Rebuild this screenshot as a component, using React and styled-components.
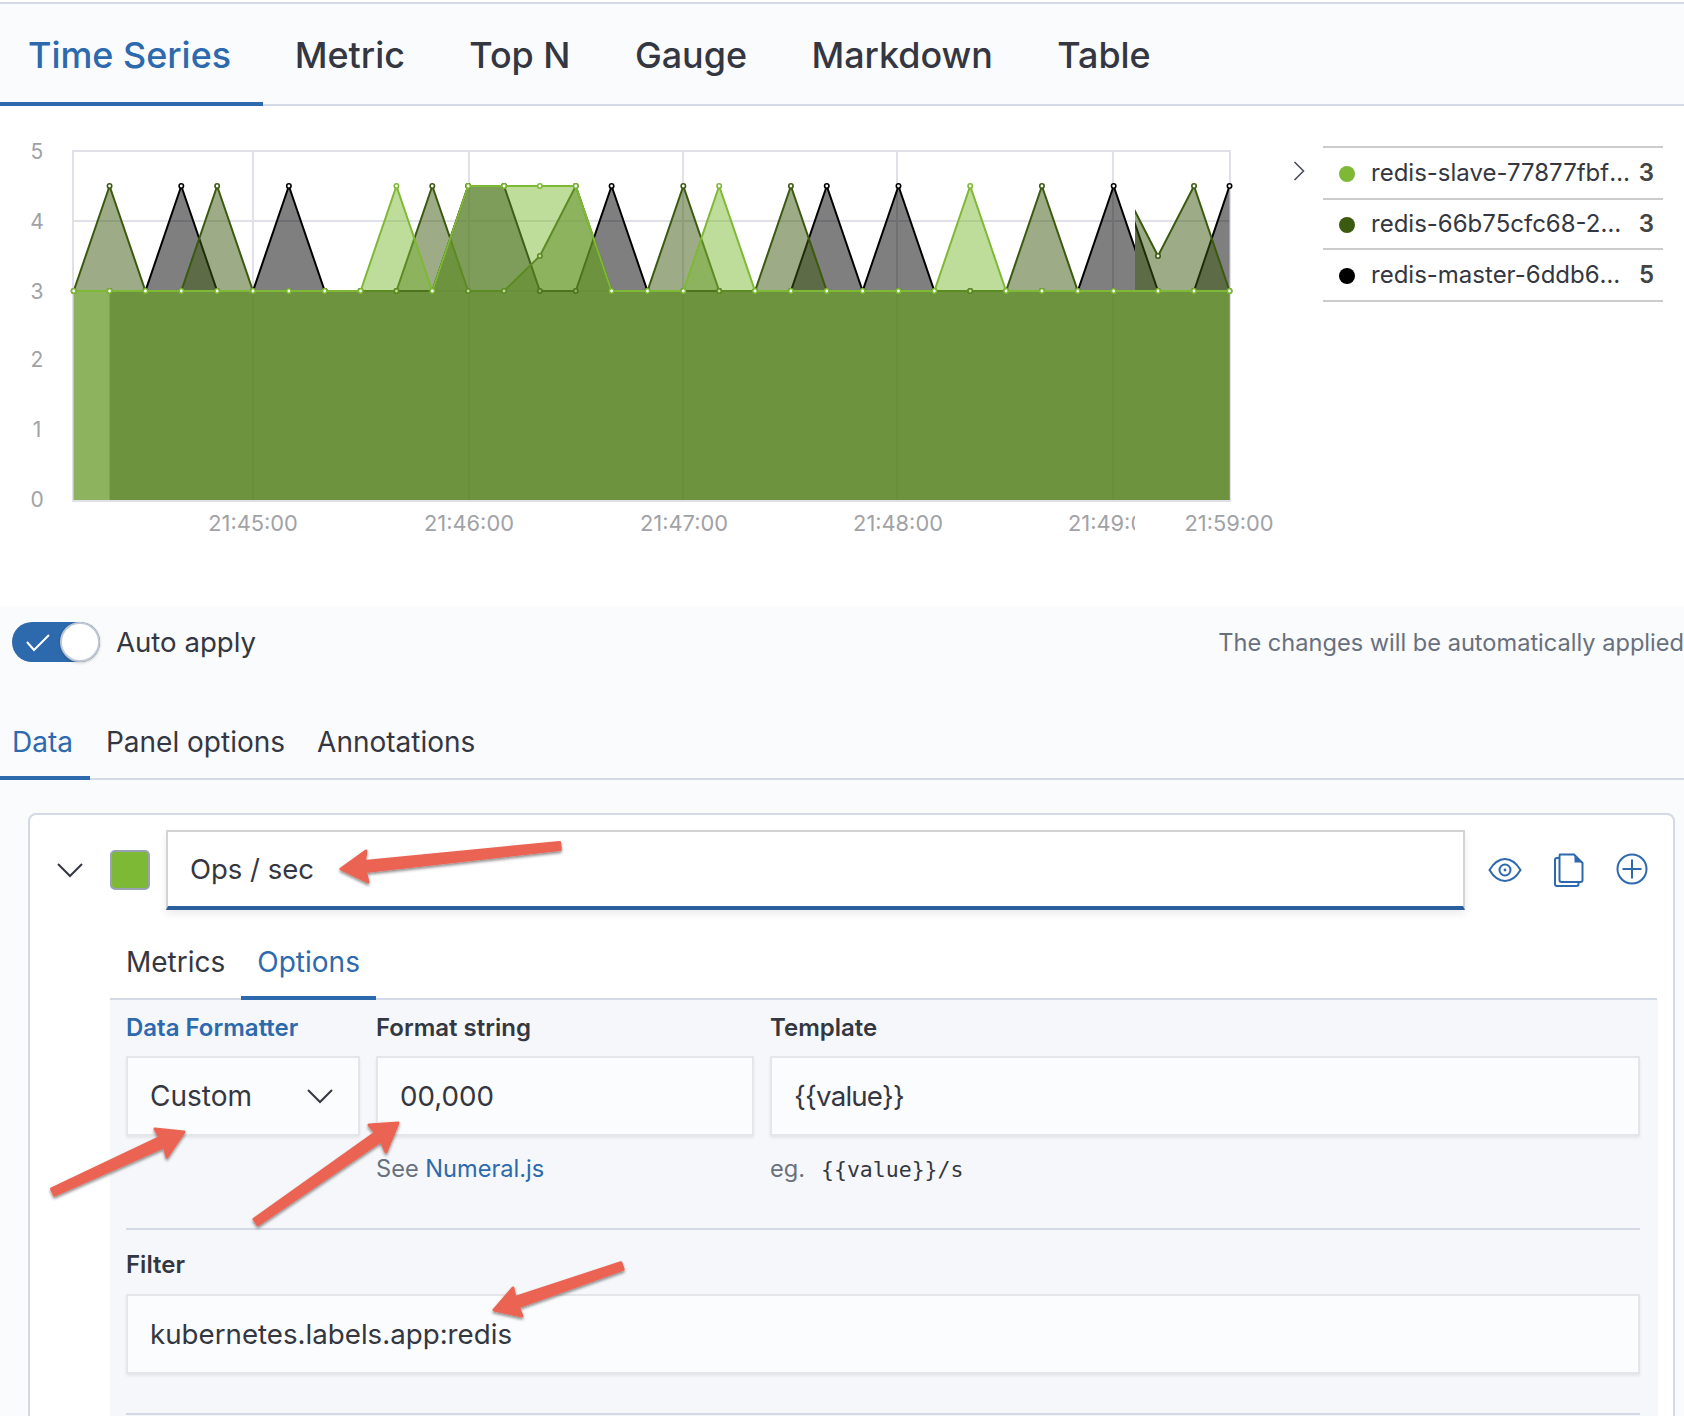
import React from 'react';
import styled, { createGlobalStyle } from 'styled-components';

const GlobalStyle = createGlobalStyle`
html, body {
  margin: 0;
  padding: 0;
  background: #fff;
  overflow: hidden;
}
* { box-sizing: border-box; }
`;

const BLUE = '#2d69ad';
const INK = '#343741';

const Page = styled.div`
position: relative;
width: 1684px;
height: 1416px;
overflow: hidden;
font-family: Inter, 'Noto Sans', sans-serif;
color: ${INK};
background: #fff;
padding-top: 2px;
`;

const TopTabs = styled.div`
display: flex;
height: 104px;
background: #fafbfd;
border-top: 2px solid #d3dae6;
border-bottom: 2px solid #d3dae6;
`;

const TopTab = styled.div`
display: flex;
align-items: center;
height: 102px;
margin-bottom: -2px;
padding: 4px 32.2px 0;
font-size: 35.9px;
font-weight: 500;
color: ${p => (p.$active ? BLUE : INK)};
border-bottom: 4px solid ${p => (p.$active ? BLUE : 'transparent')};
&:first-child { padding-left: 28px; padding-right: 31.5px; }
`;

const ChartRow = styled.div`
display: flex;
height: 500px;
background: #fff;
`;

const ChartSvg = styled.svg`
display: block;
flex: none;
font-family: Inter, sans-serif;
font-size: 21px;
`;

const TickLabel = styled.text`
font-size: 21.8px;
fill: #a0a2a6;
`;

const LegendToggle = styled.svg`
flex: none;
margin: 55px 0 0 3px;
`;

const Legend = styled.div`
width: 340px;
margin: 40px 0 0 18px;
align-self: flex-start;
border-top: 2px solid #ccc;
`;

const LegendRow = styled.div`
display: flex;
align-items: center;
height: ${p => p.$height}px;
padding: 0 9px 2px 16px;
border-bottom: 2px solid #ccc;
font-size: 24px;
`;

const Dot = styled.span`
flex: none;
width: 16px;
height: 16px;
margin-top: 3px;
border-radius: 50%;
background: ${p => p.$color};
`;

const LegendName = styled.span`
flex: 1;
min-width: 0;
margin: 0 ${p => p.$gap}px 0 16px;
white-space: nowrap;
overflow: hidden;
text-overflow: ellipsis;
`;

const LegendValue = styled.span`
font-weight: 600;
color: #444;
`;

const Editor = styled.div`
height: 810px;
background: #fafbfd;
`;

const ApplyBar = styled.div`
display: flex;
align-items: center;
height: 72px;
padding-left: 12px;
`;

const Switch = styled.div`
position: relative;
width: 88px;
height: 40px;
border-radius: 20px;
background: ${BLUE};
`;

const SwitchCheck = styled.svg`
position: absolute;
left: 13px;
top: 12px;
`;

const SwitchThumb = styled.span`
position: absolute;
right: 0;
top: 0;
width: 40px;
height: 40px;
border-radius: 50%;
background: #fff;
border: 2px solid #c3c9d3;
box-shadow: 0 1px 3px rgba(0, 0, 0, 0.2);
`;

const SwitchLabel = styled.span`
margin-left: 16px;
font-size: 27.6px;
`;

const ApplyNote = styled.span`
margin-left: auto;
font-size: 23.6px;
color: #69707d;
white-space: nowrap;
`;

const EditorTabs = styled.div`
display: flex;
height: 80px;
margin-top: 22px;
border-bottom: 2px solid #d3dae6;
`;

const EditorTab = styled.div`
display: flex;
align-items: center;
height: 80px;
margin-bottom: -2px;
padding: 8px 16px 0;
font-size: 28px;
color: ${p => (p.$active ? BLUE : INK)};
border-bottom: 4px solid ${p => (p.$active ? BLUE : 'transparent')};
&:first-child { padding-left: 12px; padding-right: 17px; }
`;

const Card = styled.div`
height: 700px;
margin: 33px 9px 0 28px;
background: #fff;
border: 2px solid #d3dae6;
border-radius: 8px;
padding-top: 15px;
`;

const SeriesRow = styled.div`
display: flex;
align-items: center;
height: 80px;
`;

const Collapse = styled.div`
display: flex;
justify-content: center;
width: 80px;
padding-right: 1px;
`;

const Swatch = styled.div`
width: 40px;
height: 40px;
margin-right: 16px;
background: #7eb936;
border: 2px solid #98a2b3;
border-radius: 5px;
`;

const NameInput = styled.div`
display: flex;
align-items: center;
width: 1299px;
height: 80px;
padding: 0 0 0 22px;
font-size: 27.5px;
background: #fff;
border: 2px solid #d3d3d3;
border-bottom: 4px solid #2a5f9e;
box-shadow: 0 4px 8px rgba(0, 0, 0, 0.08);
`;

const IconGroup = styled.div`
display: flex;
margin-left: 8px;
`;

const IconCell = styled.div`
display: flex;
align-items: center;
justify-content: center;
width: 64px;
`;

const PlusCell = styled(IconCell)`
width: 62px;
padding-bottom: 2px;
`;

const SubTabs = styled.div`
display: flex;
margin: 19px 16px 0 80px;
border-bottom: 2px solid #d3dae6;
`;

const SubTab = styled.div`
margin-bottom: -2px;
padding: 16px 16px 17px;
font-size: 28px;
line-height: 34px;
color: ${p => (p.$active ? BLUE : INK)};
border-bottom: 4px solid ${p => (p.$active ? BLUE : 'transparent')};
`;

const OptionsPanel = styled.div`
height: 500px;
margin: 0 15px 0 80px;
padding: 13px 18px 0 16px;
background: #f5f7fa;
`;

const FieldGrid = styled.div`
display: grid;
grid-template-columns: 234px 378px 870px;
column-gap: 16px;
`;

const Label = styled.div`
font-size: 24px;
font-weight: 600;
line-height: 30px;
margin-bottom: ${p => p.$gap || 13}px;
color: ${p => (p.$active ? BLUE : INK)};
`;

const Field = styled.div`
display: flex;
align-items: center;
justify-content: space-between;
height: 80px;
padding: 0 22px;
font-size: 27.7px;
background: #fbfcfd;
border: 2px solid #e4e6ea;
box-shadow: 0 2px 3px rgba(0, 0, 0, 0.07);
`;

const SelectField = styled(Field)`
width: 234px;
padding-right: 25px;
font-size: 28px;
`;

const TightValue = styled.span`
letter-spacing: -0.8px;
`;

const Help = styled.div`
margin-top: 18px;
font-size: 23.6px;
line-height: 30px;
color: #69707d;
`;

const HelpLink = styled.span`
color: ${BLUE};
`;

const Code = styled.code`
margin-left: 16px;
font-family: 'DejaVu Sans Mono', monospace;
font-size: 21.5px;
color: ${INK};
`;

const Divider = styled.div`
height: 2px;
background: #d3dae6;
margin: ${p => p.$margin};
`;

const ArrowLayer = styled.svg`
position: absolute;
left: 0;
top: 0;
pointer-events: none;
`;

// chart geometry, in page pixels
const xAt = i => 73.7 + 35.86 * i;
const yAt = v => 501 - v * 70;

const withPeaks = (start, end, peaks) => {
  const out = [];
  for (let i = start; i <= end; i++) out.push([xAt(i), yAt(peaks[i] || 3)]);
  return out;
};

const blackA = withPeaks(1, 30, { 3: 4.5, 6: 4.5, 11: 4.5, 12: 4.5, 15: 4.5, 21: 4.5, 23: 4.5, 29: 4.5 });
const darkA = withPeaks(0, 30, { 1: 4.5, 4: 4.5, 10: 4.5, 13: 3.5, 14: 4.5, 17: 4.5, 20: 4.5, 27: 4.5 });
const lightA = withPeaks(0, 30, { 9: 4.5, 11: 4.5, 12: 4.5, 13: 4.5, 14: 4.5, 18: 4.5, 25: 4.5 });

const blackB = [[1122, 186], [1158, 291], [1194, 291], [1229.5, 186]];
const darkB = [[1122, 186], [1158, 256], [1194, 186], [1229.5, 291]];
const lightB = [[1122, 291], [1158, 291], [1194, 291], [1229.5, 291]];

const BLACK = '#000000';
const DARK = '#3b5a10';
const LIGHT = '#7eb936';

const Series = ({ points, color }) => {
  const line = points.map(p => p.join(',')).join(' ');
  const first = points[0][0];
  const last = points[points.length - 1][0];
  return (
    <g>
      <polygon points={`${first},500 ${line} ${last},500`} fill={color} fillOpacity="0.5" />
      <polyline points={line} fill="none" stroke={color} strokeWidth="2" />
      {points.map((p, i) => (
        <circle key={i} cx={p[0]} cy={p[1]} r="2.2" fill="#fff" stroke={color} strokeWidth="1.6" />
      ))}
    </g>
  );
};

const Chart = () => (
  <ChartSvg width="1290" height="500" viewBox="0 106 1290 500">
    <defs>
      <clipPath id="partA"><rect x="0" y="106" width="1135" height="500" /></clipPath>
      <clipPath id="partB"><rect x="1135" y="106" width="155" height="500" /></clipPath>
    </defs>
    {[151, 221, 291, 501].map(y => (
      <line key={y} x1="73" x2="1231" y1={y} y2={y} stroke="#e0e1e8" strokeWidth="2" />
    ))}
    {[73, 253, 469, 683, 897, 1113, 1230].map(x => (
      <line key={x} x1={x} x2={x} y1="150" y2="502" stroke="#e0e1e8" strokeWidth="2" />
    ))}
    {[[5, 151], [4, 221], [3, 291], [2, 359], [1, 429], [0, 499]].map(([v, y]) => (
      <text key={v} x="37" y={y + 8} textAnchor="middle" fill="#a0a2a6">{v}</text>
    ))}
    <g clipPath="url(#partA)">
      <Series points={blackA} color={BLACK} />
      <Series points={darkA} color={DARK} />
      <Series points={lightA} color={LIGHT} />
      {[[253, '21:45:00'], [469, '21:46:00'], [684, '21:47:00'], [898, '21:48:00'], [1113, '21:49:00']].map(([x, t]) => (
        <TickLabel key={t} x={x} y="531" textAnchor="middle">{t}</TickLabel>
      ))}
    </g>
    <g clipPath="url(#partB)">
      <Series points={blackB} color={BLACK} />
      <Series points={darkB} color={DARK} />
      <Series points={lightB} color={LIGHT} />
      <TickLabel x="1229" y="531" textAnchor="middle">21:59:00</TickLabel>
    </g>
  </ChartSvg>
);

const Chevron = () => (
  <svg width="26" height="16" viewBox="0 0 26 16">
    <polyline points="1,2 13,14 25,2" fill="none" stroke={INK} strokeWidth="2" />
  </svg>
);

const EyeIcon = () => (
  <svg width="34" height="26" viewBox="0 0 34 26" fill="none" stroke={BLUE} strokeWidth="2">
    <path d="M1.5 13C6 5.5 11 2 17 2s11 3.500 15.500 11C28 20.500 23 24 17 24S6 20.500 1.500 13z" />
    <circle cx="17" cy="13" r="5.5" />
    <circle cx="17" cy="13" r="1.4" fill={BLUE} stroke="none" />
  </svg>
);

const CopyIcon = () => (
  <svg width="30" height="34" viewBox="0 0 30 34" fill="none" stroke={BLUE} strokeWidth="2">
    <path d="M6 1.500h14l8.500 8.500v17a2 2 0 0 1-2 2H7.500a2 2 0 0 1-2-2V3z" />
    <path d="M5.500 5H3a2 2 0 0 0-2 2v24a2 2 0 0 0 2 2h19.500a2 2 0 0 0 2-2v-2" />
    <path d="M20.500 1.500l8 8h-8z" fill={BLUE} stroke="none" />
  </svg>
);

const PlusIcon = () => (
  <svg width="32" height="32" viewBox="0 0 32 32" fill="none" stroke={BLUE} strokeWidth="2">
    <circle cx="16" cy="16" r="14.500" />
    <path d="M16 6.500v19M6.500 16h19" />
  </svg>
);

// tail, tip and the two barbs of each annotation arrow
const arrows = [
  { tail: [560, 846], tip: [341, 869], barbs: [[366, 851], [368, 882]] },
  { tail: [53, 1192], tip: [184, 1132], barbs: [[155, 1129], [167, 1157]] },
  { tail: [256, 1222], tip: [398, 1123], barbs: [[369, 1125], [386, 1152]] },
  { tail: [622, 1266], tip: [494, 1310], barbs: [[513, 1288], [522, 1316]] },
];

const arrowPoints = ({ tail, tip, barbs }) => {
  const dx = tip[0] - tail[0];
  const dy = tip[1] - tail[1];
  const len = Math.hypot(dx, dy);
  const ux = dx / len;
  const uy = dy / len;
  const nx = -uy;
  const ny = ux;
  const side = b => (b[0] - tip[0]) * nx + (b[1] - tip[1]) * ny;
  const [right, left] = side(barbs[0]) > 0 ? barbs : [barbs[1], barbs[0]];
  const neckX = tip[0] - ux * 24;
  const neckY = tip[1] - uy * 24;
  const at = (x, y, w) => `${x + nx * w},${y + ny * w}`;
  return [
    at(tail[0], tail[1], 3.5),
    at(neckX, neckY, 5),
    right.join(','),
    tip.join(','),
    left.join(','),
    at(neckX, neckY, -5),
    at(tail[0], tail[1], -3.5),
  ].join(' ');
};

const App = () => (
  <Page>
    <GlobalStyle />
    <TopTabs>
      <TopTab $active>Time Series</TopTab>
      <TopTab>Metric</TopTab>
      <TopTab>Top N</TopTab>
      <TopTab>Gauge</TopTab>
      <TopTab>Markdown</TopTab>
      <TopTab>Table</TopTab>
    </TopTabs>
    <ChartRow>
      <Chart />
      <LegendToggle width="12" height="20" viewBox="0 0 12 20">
        <polyline points="1.500,1 10.500,10 1.500,19" fill="none" stroke="#4a4f59" strokeWidth="1.600" />
      </LegendToggle>
      <Legend>
        <LegendRow $height={52}>
          <Dot $color={LIGHT} />
          <LegendName $gap={1}>redis-slave-77877fbf85-2mqkd</LegendName>
          <LegendValue>3</LegendValue>
        </LegendRow>
        <LegendRow $height={50}>
          <Dot $color={DARK} />
          <LegendName $gap={10}>redis-66b75cfc68-2xmtn</LegendName>
          <LegendValue>3</LegendValue>
        </LegendRow>
        <LegendRow $height={52}>
          <Dot $color={BLACK} />
          <LegendName $gap={10}>redis-master-6ddb68b9c-xq</LegendName>
          <LegendValue>5</LegendValue>
        </LegendRow>
      </Legend>
    </ChartRow>
    <Editor>
      <ApplyBar>
        <Switch>
          <SwitchCheck width="26" height="18" viewBox="0 0 26 18">
            <polyline points="2,8 9,16 24,1" fill="none" stroke="#fff" strokeWidth="2" />
          </SwitchCheck>
          <SwitchThumb />
        </Switch>
        <SwitchLabel>Auto apply</SwitchLabel>
        <ApplyNote>The changes will be automatically applied</ApplyNote>
      </ApplyBar>
      <EditorTabs>
        <EditorTab $active>Data</EditorTab>
        <EditorTab>Panel options</EditorTab>
        <EditorTab>Annotations</EditorTab>
      </EditorTabs>
      <Card>
        <SeriesRow>
          <Collapse><Chevron /></Collapse>
          <Swatch />
          <NameInput>Ops / sec</NameInput>
          <IconGroup>
            <IconCell><EyeIcon /></IconCell>
            <IconCell><CopyIcon /></IconCell>
            <PlusCell><PlusIcon /></PlusCell>
          </IconGroup>
        </SeriesRow>
        <SubTabs>
          <SubTab>Metrics</SubTab>
          <SubTab $active>Options</SubTab>
        </SubTabs>
        <OptionsPanel>
          <FieldGrid>
            <div>
              <Label $active>Data Formatter</Label>
              <SelectField>Custom<Chevron /></SelectField>
            </div>
            <div>
              <Label>Format string</Label>
              <Field>00,000</Field>
              <Help>See <HelpLink>Numeral.js</HelpLink></Help>
            </div>
            <div>
              <Label>Template</Label>
              <Field><TightValue>{'{{value}}'}</TightValue></Field>
              <Help>eg.<Code>{'{{value}}/s'}</Code></Help>
            </div>
          </FieldGrid>
          <Divider $margin="43px 0 20px" />
          <Label $gap={14}>Filter</Label>
          <Field>kubernetes.labels.app:redis</Field>
          <Divider $margin="39px 0 0" />
        </OptionsPanel>
      </Card>
    </Editor>
    <ArrowLayer width="1684" height="1416" viewBox="0 0 1684 1416">
      <defs>
        <filter id="arrowShadow" x="-10%" y="-20%" width="120%" height="150%">
          <feDropShadow dx="0" dy="2" stdDeviation="1.500" floodColor="#000" floodOpacity="0.45" />
        </filter>
      </defs>
      {arrows.map(a => (
        <polygon
          key={a.tail.join()}
          points={arrowPoints(a)}
          fill="#eb6352"
          stroke="#eb6352"
          strokeWidth="3"
          strokeLinejoin="round"
          filter="url(#arrowShadow)"
        />
      ))}
    </ArrowLayer>
  </Page>
);

export default App;
